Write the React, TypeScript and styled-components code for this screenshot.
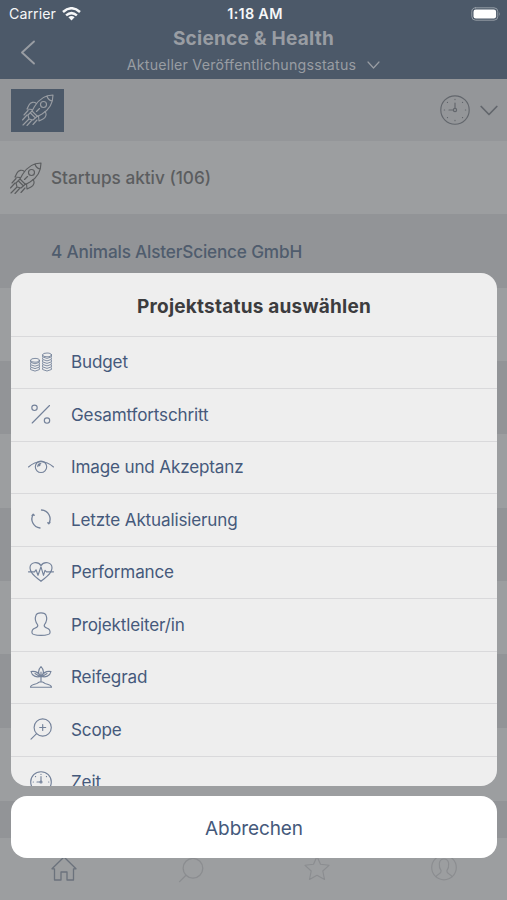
import React from "react";
import styled, { createGlobalStyle } from "styled-components";

const Global = createGlobalStyle`
  * { box-sizing: border-box; }
  body { margin: 0; font-family: Inter, "Liberation Sans", sans-serif; }
  button { font: inherit; border: 0; padding: 0; background: none; color: inherit; }
  svg { display: block; flex: none; fill: none; stroke: currentColor; stroke-linecap: round; stroke-linejoin: round; }
`;

const Screen = styled.div`
  position: relative;
  display: flex;
  flex-direction: column;
  width: 507px;
  height: 900px;
  overflow: hidden;
  background: #9c9ea0;
`;

const Header = styled.header`
  flex: none;
  height: 79px;
  background: #4c5969;
  color: #999da3;
`;

const StatusBar = styled.div`
  display: grid;
  grid-template-columns: 1fr auto 1fr;
  align-items: center;
  height: 27px;
  padding: 0 6px 0 9px;
  color: #f6f7f8;
  font-size: 14.2px;
`;

const Carrier = styled.div`
  display: flex;
  align-items: center;
  gap: 6px;
  letter-spacing: 0.05px;
`;

const WifiIcon = styled.svg`
  stroke-linecap: butt;
`;

const Clock = styled.div`
  font-size: 14.4px;
  font-weight: 600;
  letter-spacing: 0.3px;
`;

const Battery = styled.div`
  justify-self: end;
`;

const NavBar = styled.div`
  display: grid;
  grid-template-columns: 60px 1fr 60px;
  height: 52px;
`;

const BackButton = styled.button`
  display: flex;
  align-items: center;
  padding: 0 0 2px 20px;
`;

const Titles = styled.div`
  display: flex;
  flex-direction: column;
  align-items: center;
`;

const Title = styled.h1`
  margin: 0;
  font-size: 19px;
  line-height: 23px;
  font-weight: 650;
  letter-spacing: 0.25px;
`;

const Subtitle = styled.div`
  display: flex;
  align-items: center;
  gap: 11px;
  margin-top: 4px;
  font-size: 14.2px;
  letter-spacing: 0.22px;
  line-height: 21px;
`;

const FilterBar = styled.div`
  display: flex;
  align-items: center;
  justify-content: space-between;
  flex: none;
  height: 62px;
  padding: 0 9px 0 11px;
  background: #949699;
`;

const FilterBadge = styled.div`
  display: flex;
  align-items: center;
  justify-content: center;
  width: 53px;
  height: 43px;
  background: #4c5969;
  color: #999da3;
`;

const FilterActions = styled.div`
  display: flex;
  align-items: center;
  gap: 10px;
  color: #62666c;
`;

const ListRow = styled.div<{ $shaded?: boolean; $heading?: boolean }>`
  display: flex;
  align-items: center;
  flex: none;
  height: 73.35px;
  gap: 9px;
  padding-left: ${(p) => (p.$heading ? 10 : 51)}px;
  background: ${(p) => (p.$shaded ? "#929497" : "#9c9ea0")};
  color: ${(p) => (p.$heading ? "#5b5d5f" : "#4f5c6d")};
  font-size: 17.2px;
  font-weight: 500;
  letter-spacing: ${(p) => (p.$heading ? 0 : -0.18)}px;
`;

const TabBar = styled.nav`
  position: absolute;
  inset: auto 0 0 0;
  display: grid;
  grid-template-columns: repeat(4, 1fr);
  height: 62px;
  padding: 16px 0 0 1px;
  background: #9c9ea0;
`;

const Tab = styled.div<{ $active?: boolean }>`
  display: flex;
  justify-content: center;
  color: ${(p) => (p.$active ? "#6b727c" : "#8b8d90")};
`;

const ActionSheet = styled.section`
  position: absolute;
  left: 11px;
  right: 10px;
  bottom: 42px;
  display: flex;
  flex-direction: column;
  gap: 10px;
`;

const OptionPanel = styled.div`
  height: 513px;
  border-radius: 16px;
  background: #eeeeee;
  overflow: hidden;
`;

const SheetTitle = styled.h2`
  display: flex;
  align-items: center;
  justify-content: center;
  height: 62.7px;
  margin: 0;
  padding-top: 5px;
  color: #3c3c3e;
  font-size: 19px;
  font-weight: 650;
  letter-spacing: 0.22px;
`;

const Option = styled.button`
  display: flex;
  align-items: center;
  width: 100%;
  height: 52.5px;
  padding: 0 0 1px 16px;
  gap: 16px;
  border-top: 1.5px solid #d9d9db;
  color: #45597b;
  font-size: 17.1px;
  letter-spacing: -0.16px;
  text-align: left;
  svg { color: #74829a; }
`;

const CancelButton = styled.button`
  height: 62px;
  padding-top: 2px;
  border-radius: 16px;
  background: #ffffff;
  color: #45597b;
  font-size: 19px;
  letter-spacing: -0.1px;
`;

const Icon = ({ children, size = 28, weight = 1.15 }: { children: React.ReactNode; size?: number; weight?: number }) => (
  <svg width={size} height={size} viewBox="0 0 28 28" strokeWidth={weight}>
    {children}
  </svg>
);

const Rocket = () => (
  <svg width="32" height="32" viewBox="0 0 32 32" strokeWidth="1.15">
    <path d="M31 1C24 1 17 5 12.5 12.5L10 17l5.5 5.5 4.5-2.5C27.500 15.500 31 8 31 1zM25 2q1 4 5 5" />
    <circle cx="21.500" cy="10.500" r="3" />
    <path d="M14.500 9.500C12 7.500 8.500 8 7 11l-2 4 5 .5M23 17.500c2 2.500 1 6-2 7.500l-4 2-.5-5M10 17l-4 4 1 4 4 1 4.500-4M8.500 19l5 5M14.500 17.500l3-3M6 16.500L2 21M5 21l-4.500 5M7 25l-6 6M10 26l-5 5.500M15 26l-4 4.500" />
  </svg>
);

const ClockFace = () => (
  <svg width="30" height="30" viewBox="0 0 30 30" strokeWidth="1.15">
    <circle cx="15" cy="15" r="14.200" />
    <circle cx="15" cy="15" r="1.600" />
    <path d="M15 13.400V8M13.400 15H9M15 4.300v.3M15 25.400v.3M4.300 15h.3M25.400 15h.3M7.400 7.400l.1.1M22.500 22.500l.1.1M7.400 22.600l.1-.1M22.500 7.500l.1-.1" />
  </svg>
);

const Coins = () => (
  <Icon weight={0.9}>
    <ellipse cx="8" cy="12.300" rx="4.400" ry="1.900" />
    <path d="M3.600 12.300v2q4.400 3 8.800 0v-2M3.600 15.100v1.600q4.400 3 8.800 0v-1.600M3.600 17.500v1.600q4.400 3 8.800 0v-1.600M3.600 20v1.600q4.400 3 8.800 0V20" />
    <ellipse cx="20" cy="6.900" rx="4.400" ry="1.900" />
    <path d="M15.600 6.900v2q4.400 3 8.800 0v-2M15.600 9.900v1.500q4.400 3 8.800 0V9.900M15.600 12.400v1.500q4.400 3 8.800 0v-1.500M15.600 14.900v1.500q4.400 3 8.800 0v-1.500M15.600 17.400v1.500q4.400 3 8.800 0v-1.500M15.600 19.900v1.600q4.400 3 8.800 0v-1.600" />
  </Icon>
);

const Percent = () => (
  <Icon>
    <path d="M5.200 23L22.500 5.500" />
    <circle cx="7.500" cy="7.800" r="2.700" />
    <circle cx="20" cy="20.500" r="2.700" />
  </Icon>
);

const Eye = () => (
  <Icon>
    <path d="M1.500 14Q14 3.500 26.500 14" />
    <circle cx="14" cy="13.800" r="5.700" />
    <path d="M10.800 13.600a3 3 0 0 1 3-3" />
    <circle cx="12.300" cy="12" r=".6" />
  </Icon>
);

const Refresh = () => (
  <Icon weight={1.3}>
    <path d="M13 23A9 9 0 0 1 6.200 9.400M5 10.600l1.200-1.400 1 1M14.500 5a9 9 0 0 1 7.300 13.600M23 17.400l-1.200 1.400-1-1" />
  </Icon>
);

const HeartPulse = () => (
  <Icon>
    <path d="M14 23.300C9 19 3 15.500 3 9.900 3 4 11 2.800 14 7.600 17 2.800 25 4 25 9.900c0 5.600-6 9.100-11 13.400z" />
    <path d="M1.500 13.800h6l1.500-2 2 5.500 3-8.500 2.500 8.500 1.500-5 1.500 1.500h7" />
  </Icon>
);

const Person = () => (
  <Icon>
    <path d="M10.700 15C8.500 12 8 7.800 8.800 5.700 10 1.900 18 1.900 19.200 5.700 20 7.800 19.500 12 17.300 15c-.7 2 .8 2.500 3 3.300 2 .8 3 2.300 2.700 4.700-.2 1.500-2 2.300-9 2.300s-8.800-.8-9-2.300c-.3-2.400.7-3.900 2.700-4.700 2.200-.8 3.700-1.300 3-3.300z" />
  </Icon>
);

const Sprout = () => (
  <Icon>
    <path d="M14 9V19M14 13c-3-2-3.500-5.800 0-9.300 3.500 3.500 3 7.300 0 9.300zM13.500 13.500c-4 1-8.500-.3-9.500-5 3.500-.5 7.500.5 9.500 5zM14.500 13.500c4 1 8.500-.3 9.500-5-3.500-.5-7.500.5-9.500 5zM8 10.500l4 2.500M20 10.500L16 13M3.500 24.200c0-3 5.500-2.500 7.500-4.400 2-1.400 4-1.400 6 0 2 1.900 7.500 1.400 7.500 4.400z" />
  </Icon>
);

const Magnifier = ({ plus = false, size = 28 }: { plus?: boolean; size?: number }) => (
  <Icon size={size}>
    <circle cx="15.700" cy="12.500" r="8.600" />
    <path d="M9.600 18.600L4 24.200" />
    {plus && <path d="M15.700 9.500v6M12.700 12.500h6" />}
  </Icon>
);

const SmallClock = () => (
  <Icon>
    <circle cx="14" cy="14" r="10.300" />
    <circle cx="14" cy="14" r="1" />
    <path d="M14 13V8.500M13 14h-3M14 6.200v.2M6.200 14h.2M21.600 14h.2M8.500 8.500l.1.100M19.500 8.500l-.1.100" />
  </Icon>
);

const options = [
  { label: "Budget", icon: <Coins /> },
  { label: "Gesamtfortschritt", icon: <Percent /> },
  { label: "Image und Akzeptanz", icon: <Eye /> },
  { label: "Letzte Aktualisierung", icon: <Refresh /> },
  { label: "Performance", icon: <HeartPulse /> },
  { label: "Projektleiter/in", icon: <Person /> },
  { label: "Reifegrad", icon: <Sprout /> },
  { label: "Scope", icon: <Magnifier plus /> },
  { label: "Zeit", icon: <SmallClock /> },
];

export default function App() {
  return (
    <>
      <Global />
      <Screen>
        <Header>
          <StatusBar>
            <Carrier>
              Carrier
              <WifiIcon width="19" height="14" viewBox="0 0 19 14" strokeWidth="2.500">
                <path d="M1 5Q9.500-2.500 18 5M4.100 8.400q5.400-4.600 10.800 0" />
                <path d="M6.400 10.200q3.100-2.400 6.200 0L9.500 13.400z" fill="currentColor" stroke="none" />
              </WifiIcon>
            </Carrier>
            <Clock>1:18 AM</Clock>
            <Battery>
              <svg width="30" height="14" viewBox="0 0 30 14">
                <rect x=".8" y=".8" width="26" height="12.400" rx="3.800" stroke="#959da6" />
                <rect x="2.500" y="2.500" width="22.600" height="9" rx="2.300" fill="#fff" stroke="none" />
                <path d="M28.300 5q1.500 2 0 4z" fill="#959da6" stroke="none" />
              </svg>
            </Battery>
          </StatusBar>
          <NavBar>
            <BackButton aria-label="Zurück">
              <svg width="16" height="25" viewBox="0 0 16 25" strokeWidth="1.900">
                <path d="M14 1.500L2 12.500l12 11" />
              </svg>
            </BackButton>
            <Titles>
              <Title>Science &amp; Health</Title>
              <Subtitle>
                Aktueller Veröffentlichungsstatus
                <svg width="13" height="8" viewBox="0 0 13 8" strokeWidth="1.200">
                  <path d="M1 1l5.500 6L12 1" />
                </svg>
              </Subtitle>
            </Titles>
          </NavBar>
        </Header>
        <FilterBar>
          <FilterBadge><Rocket /></FilterBadge>
          <FilterActions>
            <ClockFace />
            <svg width="18" height="11" viewBox="0 0 18 11" strokeWidth="1.700">
              <path d="M1.200 1.500L9 9.500l7.800-8" />
            </svg>
          </FilterActions>
        </FilterBar>
        <ListRow $heading><Rocket />Startups aktiv (106)</ListRow>
        <ListRow $shaded>4 Animals AlsterScience GmbH</ListRow>
        <ListRow />
        <ListRow $shaded />
        <ListRow />
        <ListRow $shaded />
        <ListRow />
        <ListRow $shaded />
        <ListRow />
        <ListRow $shaded />
        <TabBar>
          <Tab $active>
            <Icon weight={1.300}><path d="M2 14.800L14 3l12 11.800h-2.500V26H17v-8h-6v8H4.500V14.800z" /></Icon>
          </Tab>
          <Tab><Magnifier size={32} /></Tab>
          <Tab>
            <Icon><path d="M14 2.500l3.500 7.800 8.500 1-6.200 5.700 1.700 8.500-7.500-4.200L6.500 25.500 8.200 17 2 11.300l8.500-1z" /></Icon>
          </Tab>
          <Tab>
            <Icon>
              <circle cx="14" cy="13.500" r="12.300" />
              <path d="M6 22.800c.5-3 5.500-2.500 5.200-6C8.500 13 8 5 14 5s5.500 8 2.800 11.800c-.3 3.500 4.700 3 5.200 6" />
            </Icon>
          </Tab>
        </TabBar>
        <ActionSheet role="dialog" aria-label="Projektstatus auswählen">
          <OptionPanel>
            <SheetTitle>Projektstatus auswählen</SheetTitle>
            {options.map((o) => (
              <Option key={o.label}>{o.icon}{o.label}</Option>
            ))}
          </OptionPanel>
          <CancelButton>Abbrechen</CancelButton>
        </ActionSheet>
      </Screen>
    </>
  );
}
